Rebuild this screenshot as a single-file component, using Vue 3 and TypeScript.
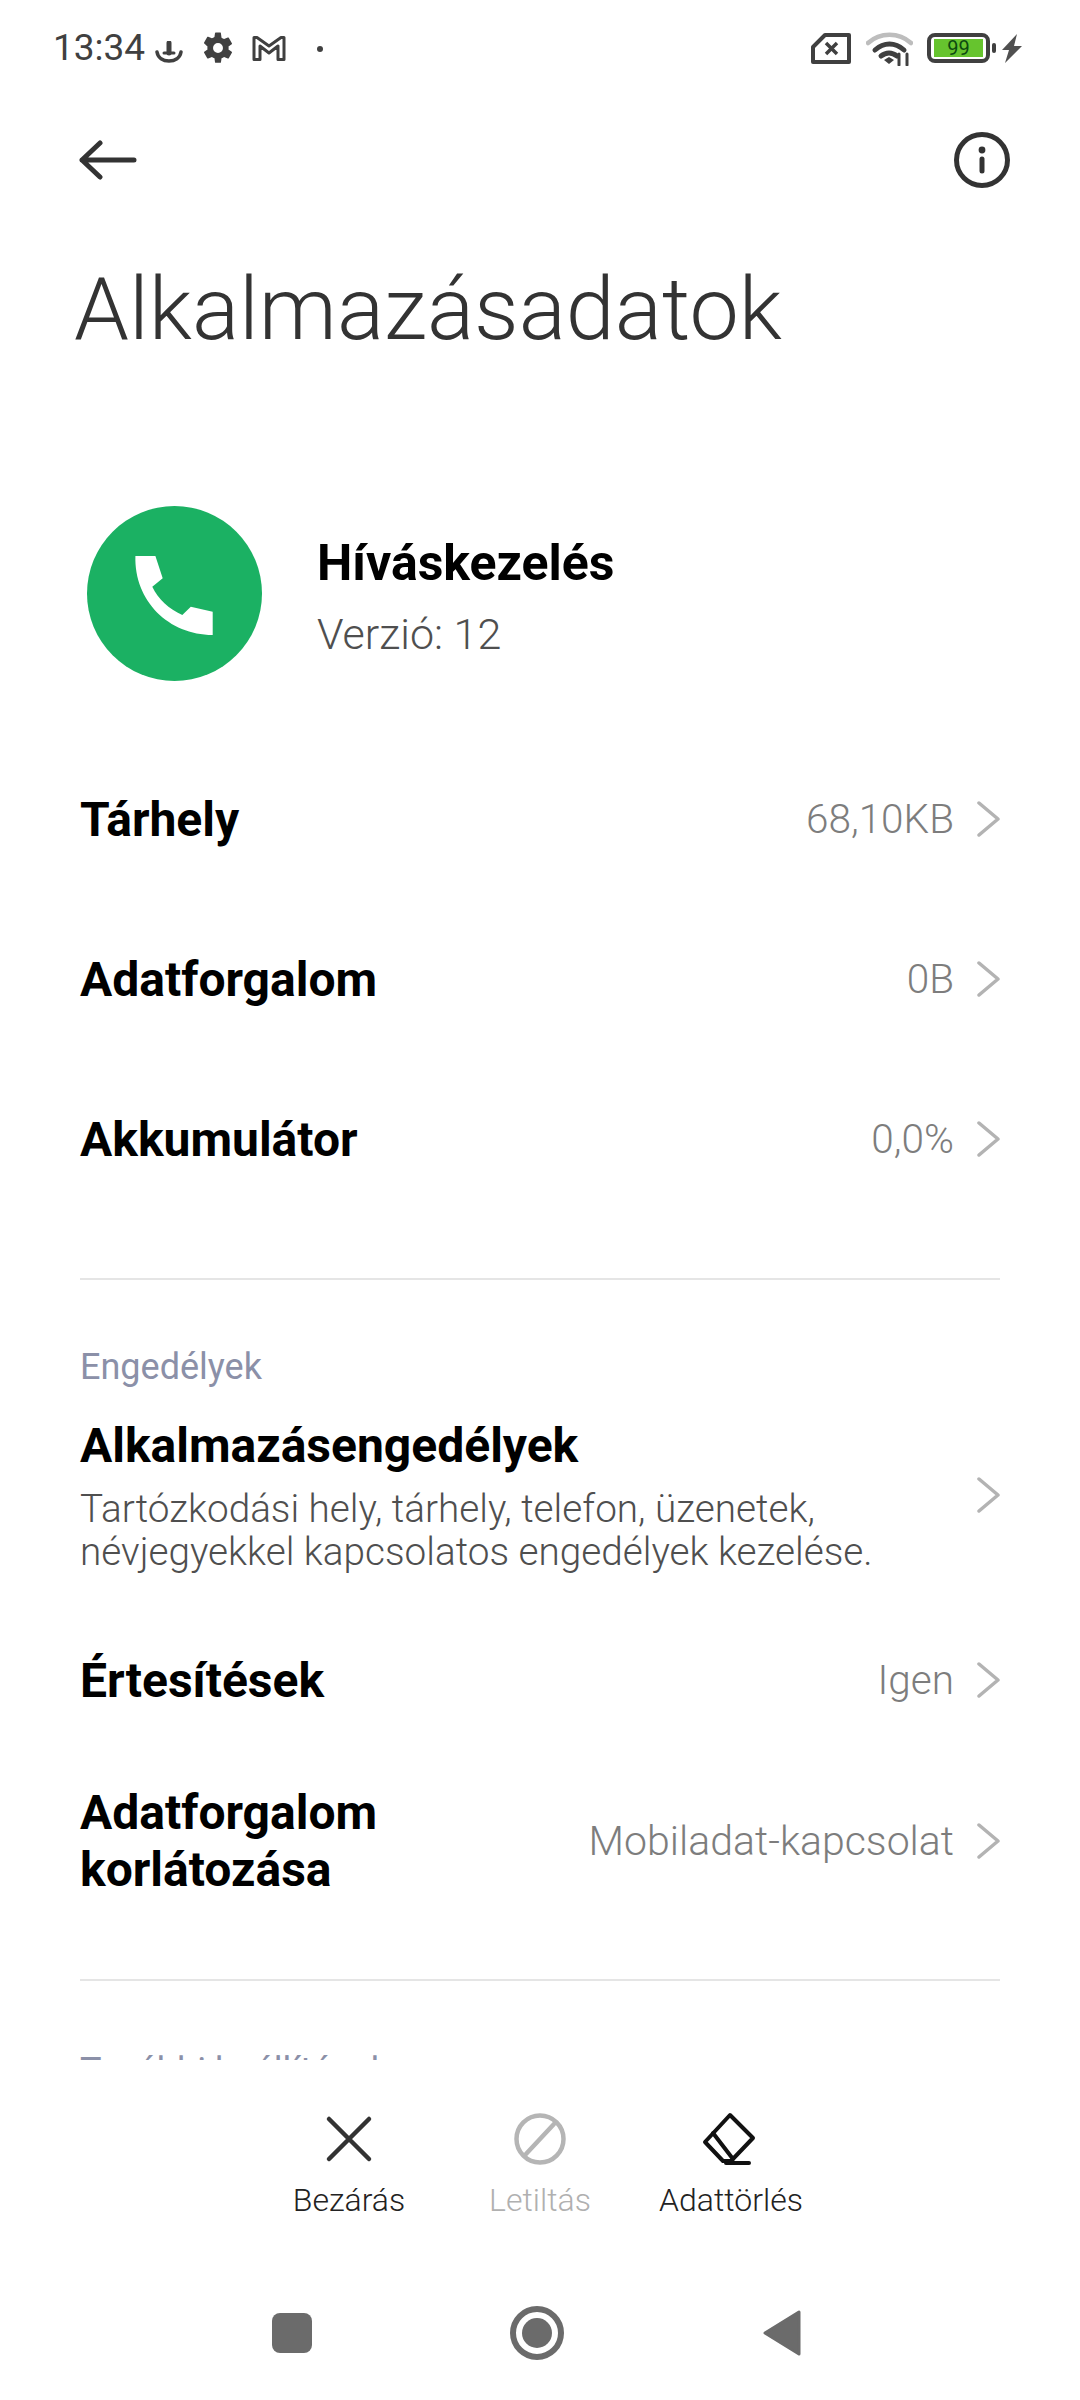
<script setup lang="ts">
interface InfoRow {
  label: string
  value: string
}

const usageRows: InfoRow[] = [
  { label: 'Tárhely', value: '68,10KB' },
  { label: 'Adatforgalom', value: '0B' },
  { label: 'Akkumulátor', value: '0,0%' }
]
</script>

<template>
  <div class="page">
    <header class="status">
      <span class="time">13:34</span>
      <svg class="st-dl" width="28" height="22" viewBox="0 0 28 22" fill="none" stroke="#404040" stroke-linecap="round">
        <path d="M14 2v10" stroke-width="5" />
        <path d="M9 12h10" stroke-width="3" />
        <path d="M2 11c1 6 6 9 12 9s11-3 12-9" stroke-width="3.5" />
      </svg>
      <svg class="st-gear" width="34" height="34" viewBox="0 0 24 24" fill="#404040">
        <path d="M19.4 13c.1-.3.1-.7.1-1s0-.7-.1-1l2.3-1.700c.2-.2.3-.4.1-.7l-2.200-3.800c-.1-.2-.4-.3-.7-.2l-2.600 1.100c-.6-.4-1.100-.7-1.800-1l-.4-2.800C14.100 1.200 13.900 1 13.600 1h-3.200c-.3 0-.5.2-.5.400l-.4 2.800c-.7.300-1.200.6-1.800 1L5.100 4.100c-.3-.1-.6 0-.7.2L2.200 8.100c-.2.300-.1.500.1.700L4.600 11c-.1.3-.1.700-.1 1s0 .7.1 1l-2.300 1.700c-.2.200-.3.400-.1.700l2.200 3.800c.1.200.4.300.7.200l2.600-1.100c.6.400 1.100.7 1.800 1l.4 2.800c0 .2.2.4.500.4h3.200c.3 0 .5-.2.500-.4l.4-2.800c.7-.3 1.200-.6 1.800-1l2.600 1.100c.3.100.6 0 .7-.2l2.200-3.800c.2-.3.100-.5-.1-.7L19.400 13zM12 15.500a3.500 3.500 0 1 1 0-7 3.500 3.500 0 0 1 0 7z" />
      </svg>
      <svg class="st-mail" width="34" height="26" viewBox="0 0 34 26" fill="none" stroke="#404040" stroke-width="3" stroke-linejoin="round">
        <path d="M2 2.500v22h6V11l9 7 9-7v13.500h6v-22h-3L17 11 5 2.500z" />
      </svg>
      <span class="st-dot"></span>
      <span class="status-spacer"></span>
      <svg class="st-sim" width="40" height="31" viewBox="0 0 40 31" fill="none" stroke="#404040" stroke-linejoin="round">
        <path d="M2 14 14 2h24v27H2z" stroke-width="4" />
        <path d="m15 10 11 11M26 10 15 21" stroke-width="3.500" />
      </svg>
      <svg class="st-wifi" width="47" height="34" viewBox="0 0 47 34" fill="none" stroke-linecap="round">
        <path d="M2 11C14 0 33 0 45 11" stroke="#bdbdbd" stroke-width="4.500" />
        <path d="M9 18c9-8 20-8 29 0" stroke="#404040" stroke-width="5" />
        <path d="M15 24c5-4 11-4 16 0" stroke="#404040" stroke-width="5" />
        <path d="m18 28 5-3 5 3-5 4z" fill="#404040" />
        <path d="M33 22v11M41 33V22" stroke="#404040" stroke-width="3" />
      </svg>
      <div class="battery">
        <div class="battery-body"><span class="battery-fill">99</span></div>
        <span class="battery-nub"></span>
      </div>
      <svg class="st-bolt" width="20" height="29" viewBox="0 0 20 29" fill="#505050">
        <path d="M15 0 0 16h7L3 29 20 12h-8z" />
      </svg>
    </header>

    <div class="topbar">
      <svg width="58" height="40" viewBox="0 0 58 40" fill="none" stroke="#333" stroke-width="5" stroke-linecap="round" stroke-linejoin="round">
        <path d="M55 20H3M21 3 3 20l18 17" />
      </svg>
      <svg width="56" height="56" viewBox="0 0 56 56" fill="none" stroke="#333">
        <circle cx="28" cy="28" r="25.500" stroke-width="5" />
        <circle cx="28" cy="18" r="3.400" fill="#333" stroke="none" />
        <path d="M28 27v12" stroke-width="5" stroke-linecap="round" />
      </svg>
    </div>

    <main class="scroll">
      <h1 class="title">Alkalmazásadatok</h1>

      <section class="app">
        <div class="app-icon">
          <svg width="175" height="175" viewBox="0 0 175 175">
            <circle cx="87.500" cy="87.500" r="87.500" fill="#1bb163" />
            <path fill="#fff" d="M48.400 50H68.400L75.700 72.300 65.300 80.700C71 93 82 103 95.300 109L103.800 100.700 125.700 105.700V129C82 129 47 95 48.400 50Z" />
          </svg>
        </div>
        <div class="app-text">
          <div class="app-name">Híváskezelés</div>
          <div class="app-version">Verzió: 12</div>
        </div>
      </section>

      <div v-for="row in usageRows" :key="row.label" class="row">
        <span class="row-label">{{ row.label }}</span>
        <span class="row-value">{{ row.value }}</span>
        <svg class="chevron" width="24" height="36" viewBox="0 0 24 36" fill="none" stroke="#b3b3b3" stroke-width="3.500" stroke-linecap="round" stroke-linejoin="round">
          <path d="m3 2 19 16L3 34" />
        </svg>
      </div>

      <hr class="divider first-divider" />

      <div class="section-label">Engedélyek</div>
      <div class="perm">
        <div class="perm-text">
          <div class="row-label">Alkalmazásengedélyek</div>
          <div class="perm-sub">Tartózkodási hely, tárhely, telefon, üzenetek, névjegyekkel kapcsolatos engedélyek kezelése.</div>
        </div>
        <svg class="chevron" width="24" height="36" viewBox="0 0 24 36" fill="none" stroke="#b3b3b3" stroke-width="3.500" stroke-linecap="round" stroke-linejoin="round">
          <path d="m3 2 19 16L3 34" />
        </svg>
      </div>

      <div class="row">
        <span class="row-label">Értesítések</span>
        <span class="row-value">Igen</span>
        <svg class="chevron" width="24" height="36" viewBox="0 0 24 36" fill="none" stroke="#b3b3b3" stroke-width="3.500" stroke-linecap="round" stroke-linejoin="round">
          <path d="m3 2 19 16L3 34" />
        </svg>
      </div>
      <div class="row row-tall">
        <span class="row-label row-label-wrap">Adatforgalom korlátozása</span>
        <span class="row-value">Mobiladat-kapcsolat</span>
        <svg class="chevron" width="24" height="36" viewBox="0 0 24 36" fill="none" stroke="#b3b3b3" stroke-width="3.500" stroke-linecap="round" stroke-linejoin="round">
          <path d="m3 2 19 16L3 34" />
        </svg>
      </div>

      <hr class="divider second-divider" />
      <div class="section-label section-label-next">További beállítások</div>
    </main>

    <div class="actions">
      <div class="action">
        <svg width="54" height="54" viewBox="0 0 54 54" fill="none" stroke="#333" stroke-width="4.500" stroke-linecap="round">
          <path d="m7 7 40 40M47 7 7 47" />
        </svg>
        <span>Bezárás</span>
      </div>
      <div class="action action-off">
        <svg width="54" height="54" viewBox="0 0 54 54" fill="none" stroke="#b5b5b5" stroke-width="4.500" stroke-linecap="round">
          <circle cx="27" cy="27" r="23.500" />
          <path d="M41 12 13 42" />
        </svg>
        <span>Letiltás</span>
      </div>
      <div class="action action-erase">
        <svg width="54" height="54" viewBox="0 0 54 54" fill="none" stroke="#111" stroke-width="4" stroke-linecap="round" stroke-linejoin="round">
          <path d="M28 3 51 26 29 49h-8L3 30z" />
          <path d="M11 21 31 47M24 51h23" />
        </svg>
        <span>Adattörlés</span>
      </div>
    </div>

    <nav class="nav">
      <span class="nav-cell"><span class="nav-square"></span></span>
      <span class="nav-cell">
        <svg width="54" height="54" viewBox="0 0 54 54" fill="#6b6b6b">
          <circle cx="27" cy="27" r="24" fill="none" stroke="#6b6b6b" stroke-width="6" />
          <circle cx="27" cy="27" r="15" />
        </svg>
      </span>
      <span class="nav-cell">
        <svg width="38" height="46" viewBox="0 0 38 46" fill="#6b6b6b" stroke="#6b6b6b" stroke-width="3" stroke-linejoin="round">
          <path d="M36 2v42L2 23z" />
        </svg>
      </span>
    </nav>
  </div>
</template>

<style scoped>
.page {
  width: 1080px;
  height: 2400px;
  display: flex;
  flex-direction: column;
  overflow: hidden;
  background: #fff;
  font-family: Roboto, "Liberation Sans", sans-serif;
  color: #000;
}

.status {
  height: 96px;
  flex: none;
  display: flex;
  align-items: center;
  padding: 0 58px 0 53px;
  box-sizing: border-box;
}

.time {
  font-size: 37px;
  color: #404040;
  line-height: 36px;
}

.st-dl {
  margin-left: 10px;
  margin-top: 7px;
}

.st-gear {
  margin-left: 18px;
}

.st-mail {
  margin-left: 17px;
}

.st-dot {
  width: 6px;
  height: 6px;
  border-radius: 50%;
  background: #404040;
  margin-left: 31px;
  margin-top: 2px;
}

.status-spacer {
  flex: 1;
}

.st-wifi {
  margin-left: 15px;
  margin-top: 2px;
}

.battery {
  display: flex;
  align-items: center;
  margin-left: 14px;
}

.battery-body {
  width: 63px;
  height: 30px;
  box-sizing: border-box;
  border: 4px solid #404040;
  border-radius: 8px;
  padding: 2px 3px;
  display: flex;
}

.battery-fill {
  flex: 1;
  background: #66c42e;
  color: #0c4a10;
  font-size: 20px;
  line-height: 18px;
  text-align: center;
}

.battery-nub {
  width: 4px;
  height: 10px;
  background: #404040;
  border-radius: 2px;
  margin-left: 2px;
}

.st-bolt {
  margin-left: 6px;
}

.topbar {
  height: 128px;
  flex: none;
  display: flex;
  align-items: center;
  justify-content: space-between;
  padding: 0 70px 0 79px;
}

.scroll {
  height: 1836px;
  flex: none;
  overflow: hidden;
  padding: 0 80px;
  box-sizing: border-box;
}

.title {
  margin: 25px 0 0 -6px;
  font-size: 88px;
  font-weight: 300;
  line-height: 120px;
  color: #333;
}

.app {
  display: flex;
  align-items: center;
  margin: 137px 0 58px 7px;
}

.app-icon {
  display: flex;
  margin-right: 55px;
}

.app-text {
  padding-top: 4px;
}

.app-name {
  font-size: 50px;
  font-weight: 700;
  line-height: 60px;
}

.app-version {
  font-size: 43px;
  font-weight: 300;
  color: #4f4f4f;
  line-height: 50px;
  margin-top: 16px;
}

.row {
  height: 160px;
  display: flex;
  align-items: center;
}

.row-tall {
  height: 162px;
}

.row-label {
  font-size: 48px;
  font-weight: 700;
  line-height: 57px;
}

.row-label-wrap {
  width: 340px;
}

.row-value {
  margin-left: auto;
  font-size: 40.5px;
  font-weight: 300;
  color: #7d7d7d;
}

.row-tall .row-value {
  font-size: 41px;
}

.chevron {
  margin-left: 22px;
  flex: none;
}

.divider {
  border: 0;
  height: 2px;
  background: #e5e5e5;
  margin: 0;
}

.first-divider {
  margin-top: 59px;
}

.second-divider {
  margin-top: 57px;
}

.section-label {
  font-size: 36px;
  line-height: 46px;
  color: #8b90a8;
  margin-top: 64px;
}

.section-label-next {
  margin-top: 67px;
}

.perm {
  display: flex;
  align-items: center;
  justify-content: space-between;
  margin-top: 27px;
  margin-bottom: 27px;
}

.perm-text {
  width: 830px;
}

.perm-sub {
  font-size: 38.700px;
  font-weight: 300;
  line-height: 43px;
  color: #4f4f4f;
  margin-top: 13px;
}

.actions {
  flex: none;
  height: 220px;
  display: flex;
  justify-content: center;
  padding-top: 52px;
  box-sizing: border-box;
}

.action {
  width: 191px;
  display: flex;
  flex-direction: column;
  align-items: center;
  font-size: 32px;
  font-weight: 300;
  color: #222;
  white-space: nowrap;
}

.action span {
  margin-top: 12px;
  line-height: 44px;
}

.action-off {
  color: #b0b0b0;
}

.action-erase svg {
  margin-left: -4px;
}

.nav {
  flex: none;
  height: 120px;
  display: flex;
  justify-content: center;
  align-items: center;
  padding: 0 6px 14px 0;
  box-sizing: border-box;
}

.nav-cell {
  width: 245px;
  display: flex;
  justify-content: center;
}

.nav-square {
  width: 40px;
  height: 40px;
  border-radius: 8px;
  background: #6b6b6b;
}
</style>
